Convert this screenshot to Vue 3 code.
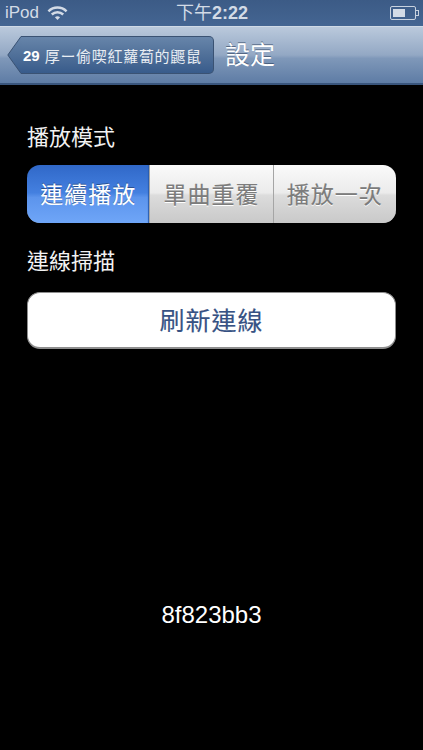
<template>
  <div class="screen">
    <!-- 狀態列 -->
    <div class="status-bar">
      <div class="status-left">
        <span class="carrier">iPod</span>
        <svg class="wifi" width="21" height="16" viewBox="0 0 22 16">
          <path d="M1.5 6.2C6.8 1 15.2 1 20.5 6.2" fill="none" stroke="#d3dbe6" stroke-width="2.6" />
          <path d="M5 9.6C8.4 6.4 13.6 6.4 17 9.6" fill="none" stroke="#d3dbe6" stroke-width="2.6" />
          <path d="M8.3 12.4L11 15.4L13.7 12.4C12 11 10 11 8.3 12.4Z" fill="#d3dbe6" />
        </svg>
      </div>
      <div class="clock"><span class="clock-cjk">下午</span>2:22</div>
      <div class="battery">
        <div class="battery-body"><div class="battery-level"></div></div>
        <div class="battery-tip"></div>
      </div>
    </div>

    <!-- 導覽列 -->
    <div class="nav-bar">
      <button class="back-btn">
        <svg class="back-arrow" width="16" height="38" viewBox="0 0 16 38">
          <defs>
            <linearGradient id="backFill" x1="0" y1="0" x2="0" y2="1">
              <stop offset="0" stop-color="#6785aa" />
              <stop offset="0.5" stop-color="#507099" />
              <stop offset="1" stop-color="#385b8b" />
            </linearGradient>
          </defs>
          <path d="M16 .5H14L.8 19L14 37.5H16Z" fill="url(#backFill)" stroke="#3a5273" stroke-width="1" />
        </svg>
        <span class="back-body"><b>29</b><span class="back-name">厚ー偷喫紅蘿蔔的鼴鼠</span></span>
      </button>
      <div class="nav-title">設定</div>
    </div>

    <!-- 內容 -->
    <div class="content">
      <div class="section-label">播放模式</div>
      <div class="segments">
        <div
          v-for="(mode, i) in modes"
          :key="mode"
          class="segment"
          :class="{ active: i === 0 }"
        >
          {{ mode }}
        </div>
      </div>

      <div class="section-label second">連線掃描</div>
      <button class="refresh-btn">刷新連線</button>

      <div class="device-id">8f823bb3</div>
    </div>
  </div>
</template>

<script setup>
const modes = ["連續播放", "單曲重覆", "播放一次"];
</script>

<style scoped>
.screen {
  width: 423px;
  height: 750px;
  overflow: hidden;
  background: #000;
  font-family: "Liberation Sans", "Noto Sans CJK TC", sans-serif;
}

.status-bar {
  height: 26px;
  box-sizing: border-box;
  padding: 0 4px 0 5px;
  display: flex;
  align-items: center;
  justify-content: space-between;
  position: relative;
  background: linear-gradient(#3c5b86, #446592);
  color: #d3dbe6;
}

.status-left {
  display: flex;
  align-items: center;
  gap: 8px;
}

.carrier {
  font-size: 17px;
}

.clock {
  position: absolute;
  left: 176px;
  top: 1px;
  font-size: 18px;
  font-weight: bold;
  line-height: 24px;
}

.clock-cjk {
  font-weight: normal;
}

.battery {
  display: flex;
  align-items: center;
}

.battery-body {
  width: 20px;
  height: 8px;
  padding: 2px;
  border: 1px solid #c8d2df;
  border-radius: 2px;
}

.battery-level {
  width: 12px;
  height: 100%;
  background: #d3dbe6;
}

.battery-tip {
  width: 2px;
  height: 4px;
  border: 1px solid #c8d2df;
  border-left: 0;
}

.nav-bar {
  height: 59px;
  box-sizing: border-box;
  padding: 9px 0 0 7px;
  display: flex;
  align-items: flex-start;
  background: linear-gradient(#bac9dc 0%, #93a8c4 50%, #7f98b9 56%, #5e7ca5 100%);
  border-top: 1px solid #cfd9e6;
  border-bottom: 2px solid #39557c;
}

.back-btn {
  height: 38px;
  padding: 0;
  display: flex;
  background: none;
  border: 0;
  font: inherit;
}

.back-arrow {
  display: block;
}

.back-body {
  width: 192px;
  height: 38px;
  box-sizing: border-box;
  margin-left: -1px;
  display: flex;
  align-items: center;
  gap: 5px;
  padding-left: 1px;
  font-size: 15px;
  white-space: nowrap;
  color: #e8edf3;
  background: linear-gradient(#6785aa, #507099 50%, #385b8b);
  border: 1px solid #3a5273;
  border-left: 0;
  border-radius: 0 5px 5px 0;
}

.back-body b {
  color: #fff;
}

.back-name {
  letter-spacing: 0.7px;
}

.nav-title {
  margin-left: 11px;
  font-size: 25px;
  line-height: 38px;
  color: #fff;
  text-shadow: 0 -1px 0 rgba(40, 60, 90, 0.6);
}

.content {
  padding: 0 27px;
  position: relative;
}

.section-label {
  margin-top: 38px;
  font-size: 22px;
  line-height: 30px;
  color: #f2f2f2;
}

.section-label.second {
  margin-top: 24px;
}

.segments {
  margin-top: 12px;
  height: 58px;
  display: flex;
  border-radius: 13px;
  overflow: hidden;
  box-shadow: inset 0 -1px 0 #8d8d8d;
}

.segment {
  flex: 1;
  display: flex;
  align-items: center;
  justify-content: center;
  padding-bottom: 2px;
  box-sizing: border-box;
  font-size: 23px;
  letter-spacing: 1px;
  color: #7c7c7c;
  -webkit-text-stroke: 0.15px currentColor;
  text-shadow: 0 1px 0 #fff;
  background: linear-gradient(#fafafa 0%, #ebebeb 48%, #dcdcdc 52%, #c9c9c9 100%);
  border-left: 1px solid #a5a5a5;
}

.segment.active {
  color: #fff;
  -webkit-text-stroke: 0;
  text-shadow: 0 -1px 0 rgba(0, 0, 0, 0.35);
  background: linear-gradient(#3068c8 0%, #4480e0 48%, #5c94ec 56%, #6fa6f8 100%);
  border-left: 0;
  box-shadow: inset -2px 0 1px -1px #2a5cae;
}

.refresh-btn {
  display: block;
  width: 100%;
  height: 57px;
  margin-top: 15px;
  padding: 0 0 2px;
  font: inherit;
  font-size: 25px;
  letter-spacing: 1px;
  color: #375284;
  -webkit-text-stroke: 0.15px currentColor;
  background: #fff;
  border: 1px solid #8e8e8e;
  border-bottom: 2px solid #8e8e8e;
  border-radius: 13px;
}

.device-id {
  margin-top: 252px;
  text-align: center;
  font-size: 24px;
  line-height: 28px;
  color: #fff;
}
</style>
